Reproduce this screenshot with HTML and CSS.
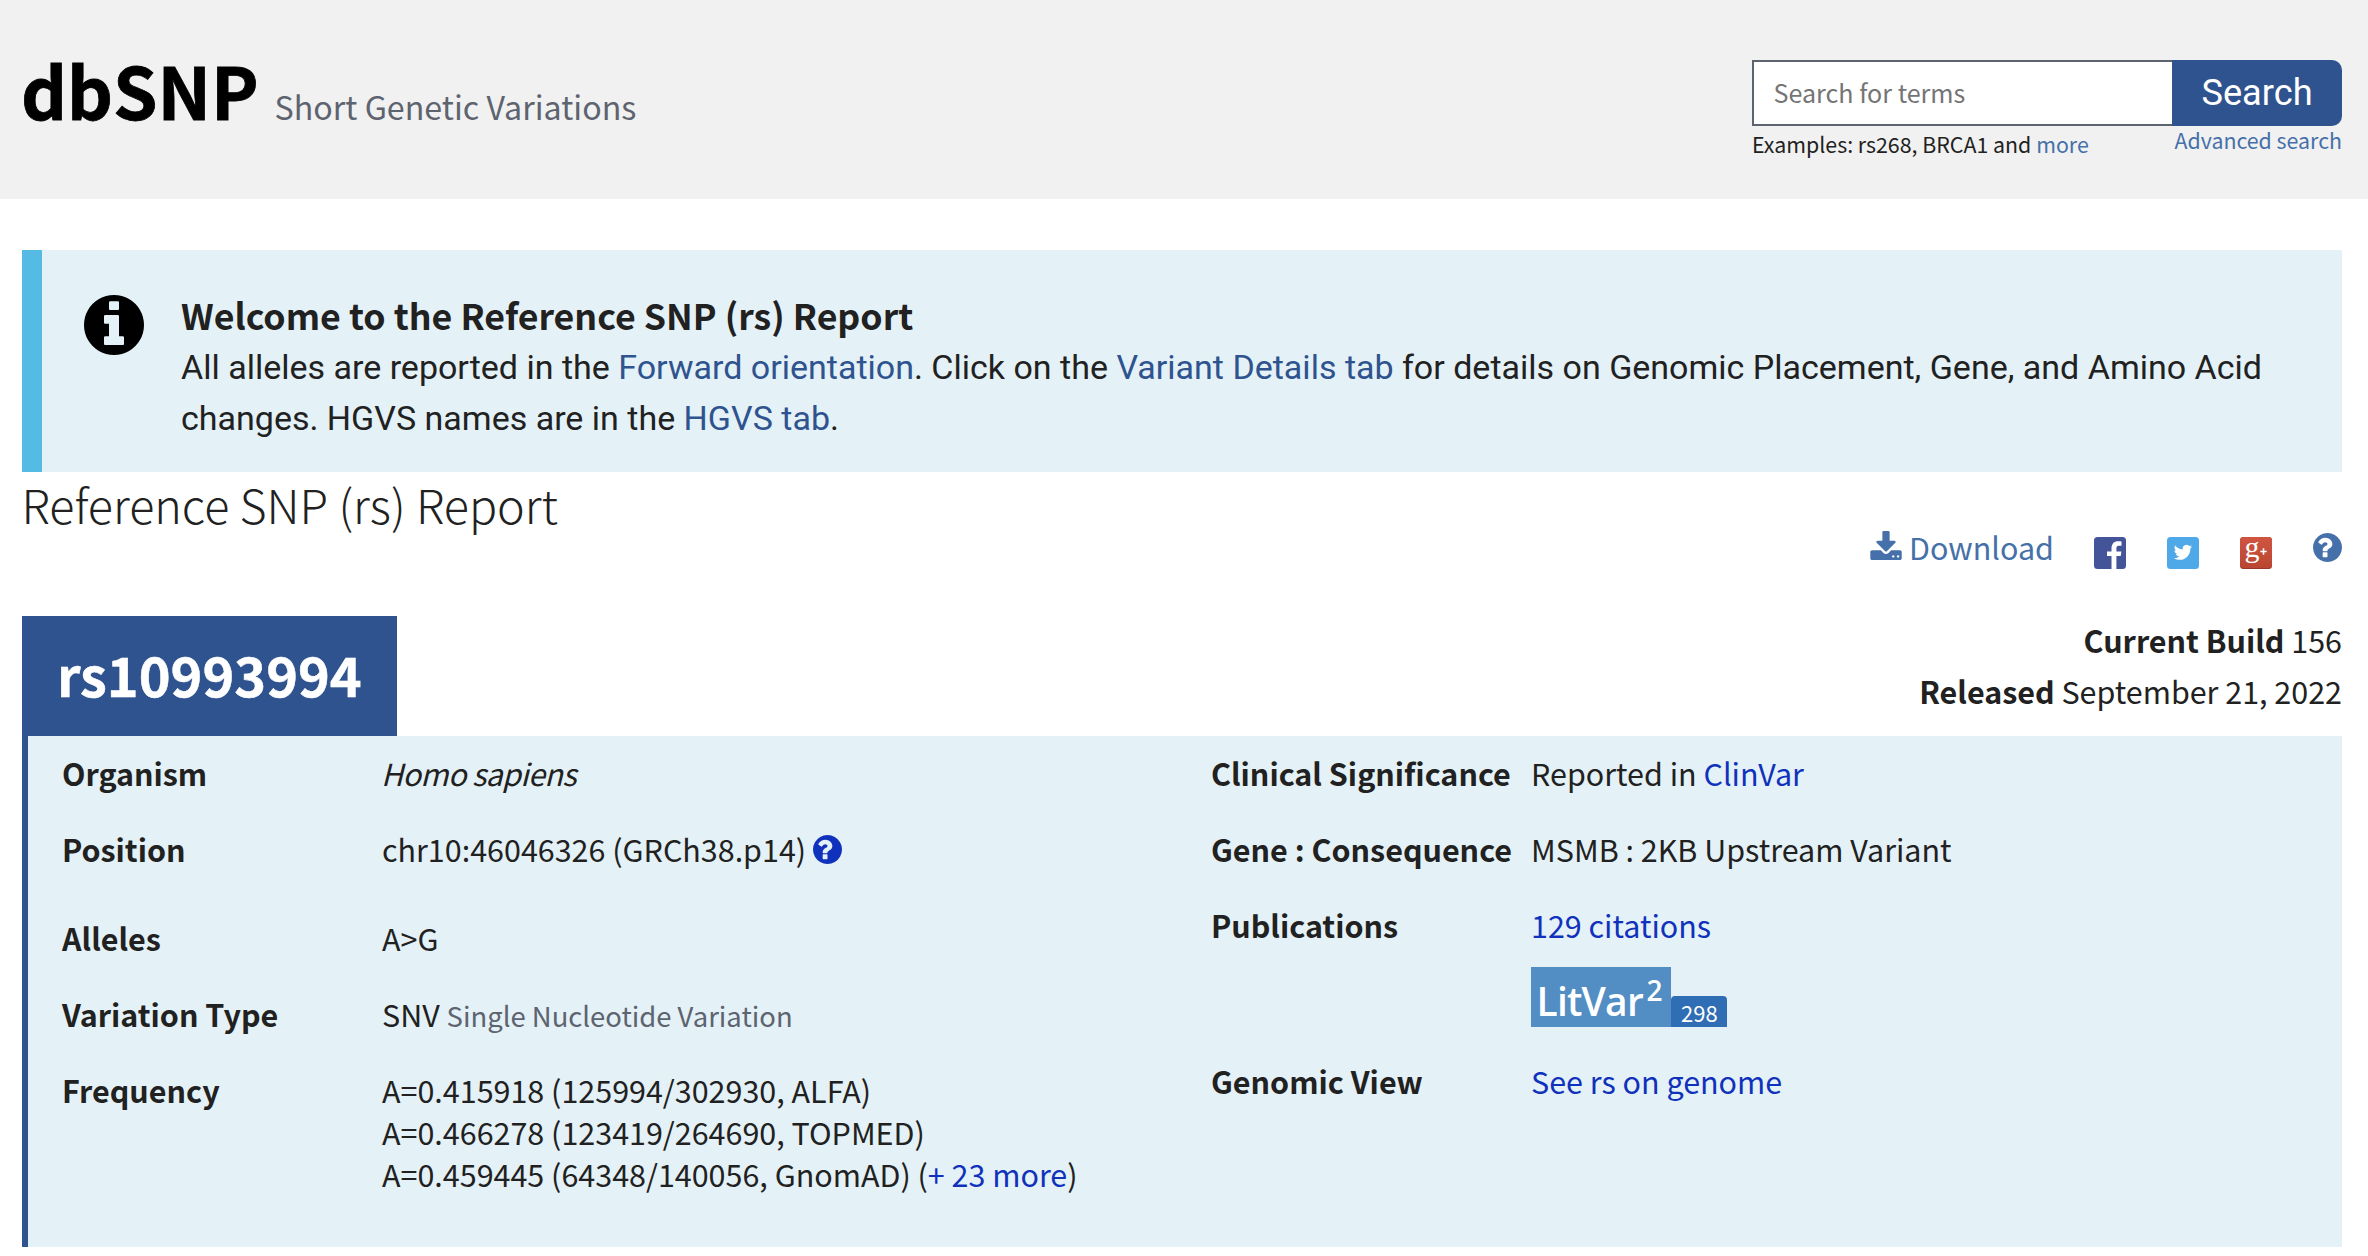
FILE: index.html
```html
<!DOCTYPE html>
<html lang="en">
<head>
<meta charset="utf-8">
<title>rs10993994 RefSNP Report - dbSNP</title>
<link rel="stylesheet" href="styles.css">
</head>
<body>
<header class="site-header">
  <div class="brand">
    <h1 class="brand-name">dbSNP</h1>
    <span class="brand-tagline">Short Genetic Variations</span>
  </div>
  <form class="search">
    <div class="search-row">
      <input class="search-input" type="text" placeholder="Search for terms" aria-label="Search">
      <button class="search-button" type="button">Search</button>
    </div>
    <div class="search-hints">
      <span class="examples">Examples: rs268, BRCA1 and <a class="link" href="#">more</a></span>
      <a class="link advanced" href="#">Advanced search</a>
    </div>
  </form>
</header>

<main class="page">
  <section class="banner">
    <svg class="banner-icon" viewBox="128 128 1536 1536"><path d="M1152 1376v-160q0-14-9-23t-23-9h-96v-512q0-14-9-23t-23-9h-320q-14 0-23 9t-9 23v160q0 14 9 23t23 9h96v320h-96q-14 0-23 9t-9 23v160q0 14 9 23t23 9h448q14 0 23-9t9-23zm-128-896v-160q0-14-9-23t-23-9h-192q-14 0-23 9t-9 23v160q0 14 9 23t23 9h192q14 0 23-9t9-23zm640 416q0 209-103 385.5t-279.5 279.5-385.5 103-385.5-103-279.5-279.5-103-385.5 103-385.5 279.5-279.5 385.5-103 385.5 103 279.5 279.5 103 385.5z"/></svg>
    <div class="banner-body">
      <h3 class="banner-title">Welcome to the Reference SNP (rs) Report</h3>
      <p class="banner-text">All alleles are reported in the <a href="#">Forward orientation</a>. Click on the <a href="#">Variant Details tab</a> for details on Genomic Placement, Gene, and Amino Acid<br>changes. HGVS names are in the <a href="#">HGVS tab</a>.</p>
    </div>
  </section>

  <h2 class="report-title">Reference SNP (rs) Report</h2>

  <div class="actions">
    <a class="link download" href="#"><svg class="download-icon" viewBox="0 0 1664 1536"><path d="M1280 1344q0-26-19-45t-45-19-45 19-19 45 19 45 45 19 45-19 19-45zm256 0q0-26-19-45t-45-19-45 19-19 45 19 45 45 19 45-19 19-45zm128-224v320q0 40-28 68t-68 28h-1472q-40 0-68-28t-28-68v-320q0-40 28-68t68-28h465l135 136q58 56 136 56t136-56l136-136h464q40 0 68 28t28 68zm-325-569q17 41-14 70l-448 448q-18 19-45 19t-45-19l-448-448q-31-29-14-70 17-39 59-39h256v-448q0-26 19-45t45-19h256q26 0 45 19t19 45v448h256q42 0 59 39z"/></svg><span class="download-label">Download</span></a>
    <svg class="social" viewBox="0 0 32 32"><rect width="32" height="32" rx="3.5" fill="#435499"/><path fill="#fff" d="M17.5 32V19H13v-4.500h4.500v-3C17.500 6.700 20 4.200 24.200 4.200c1.600 0 2.800.1 3.300.2v4.300h-2.600c-2.100 0-2.500 1-2.500 2.500v3.300h5l-.7 4.500h-4.300V32z"/></svg>
    <svg class="social" viewBox="0 0 32 32"><rect width="32" height="32" rx="3.500" fill="#4fa9e8"/><path fill="#fff" transform="translate(6.800 6.200) scale(.765)" d="M23.953 4.57a10 10 0 01-2.825.775 4.958 4.958 0 002.163-2.723c-.951.555-2.005.959-3.127 1.184a4.920 4.920 0 00-8.384 4.482C7.690 8.095 4.067 6.130 1.640 3.162a4.822 4.822 0 00-.666 2.475c0 1.710.870 3.213 2.188 4.096a4.904 4.904 0 01-2.228-.616v.060a4.923 4.923 0 003.946 4.827 4.996 4.996 0 01-2.212.085 4.936 4.936 0 004.604 3.417 9.867 9.867 0 01-6.102 2.105c-.390 0-.779-.023-1.170-.067a13.995 13.995 0 007.557 2.209c9.053 0 13.998-7.496 13.998-13.985 0-.210 0-.420-.015-.630A9.935 9.935 0 0024 4.590z"/></svg>
    <svg class="social" viewBox="0 0 32 32">
      <defs><linearGradient id="gplus" x2="0" y2="1"><stop offset="0" stop-color="#d05541"/><stop offset="1" stop-color="#b94632"/></linearGradient></defs>
      <rect width="32" height="32" rx="3.500" fill="#993826"/><rect width="32" height="31" rx="3.500" fill="url(#gplus)"/>
      <text class="gplus-letter" x="4.500" y="19.500">g</text><path d="M20.300 14.500h6.400M23.500 11.300v6.400" stroke="#fff" stroke-width="1.600"/>
    </svg>
    <svg class="help help-action" viewBox="128 128 1536 1536"><path d="M896 1376v-192q0-14-9-23t-23-9h-192q-14 0-23 9t-9 23v192q0 14 9 23t23 9h192q14 0 23-9t9-23zm256-672q0-88-55.500-163t-138.500-116-170-41q-243 0-371 213-15 24 8 42l132 100q7 6 19 6 16 0 25-12 53-68 86-92 34-24 86-24 48 0 85.500 26t37.500 59q0 38-20 61t-68 45q-63 28-115.500 86.500t-52.500 125.500v36q0 14 9 23t23 9h192q14 0 23-9t9-23q0-19 21.500-49.500t54.500-49.500q32-18 49-28.500t46-35 44.500-48 28-60.500 12.500-81zm512 192q0 209-103 385.500t-279.500 279.500-385.500 103-385.500-103-279.500-279.500-103-385.500 103-385.500 279.500-279.500 385.500-103 385.500 103 279.500 279.500 103 385.500z"/></svg>
  </div>

  <div class="record-head">
    <div class="record-id">rs10993994</div>
    <div class="build"><b>Current Build</b> 156<br><b>Released</b> September 21, 2022</div>
  </div>

  <section class="record">
    <dl class="facts facts-left">
      <dt>Organism</dt><dd class="species">Homo sapiens</dd>
      <dt>Position</dt><dd class="position">chr10:46046326 (GRCh38.p14)<svg class="help help-inline" viewBox="128 128 1536 1536"><path d="M896 1376v-192q0-14-9-23t-23-9h-192q-14 0-23 9t-9 23v192q0 14 9 23t23 9h192q14 0 23-9t9-23zm256-672q0-88-55.500-163t-138.500-116-170-41q-243 0-371 213-15 24 8 42l132 100q7 6 19 6 16 0 25-12 53-68 86-92 34-24 86-24 48 0 85.500 26t37.500 59q0 38-20 61t-68 45q-63 28-115.500 86.500t-52.500 125.500v36q0 14 9 23t23 9h192q14 0 23-9t9-23q0-19 21.500-49.500t54.500-49.500q32-18 49-28.500t46-35 44.500-48 28-60.500 12.500-81zm512 192q0 209-103 385.500t-279.500 279.500-385.500 103-385.500-103-279.500-279.500-103-385.500 103-385.500 279.500-279.500 385.500-103 385.500 103 279.500 279.500 103 385.500z"/></svg></dd>
      <dt>Alleles</dt><dd>A&gt;G</dd>
      <dt>Variation Type</dt><dd>SNV <small class="note">Single Nucleotide Variation</small></dd>
      <dt>Frequency</dt><dd>A=0.415918 (125994/302930, ALFA)<br>A=0.466278 (123419/264690, TOPMED)<br>A=0.459445 (64348/140056, GnomAD) (<a href="#">+ 23 more</a>)</dd>
    </dl>
    <dl class="facts facts-right">
      <dt>Clinical Significance</dt><dd>Reported in <a href="#">ClinVar</a></dd>
      <dt>Gene : Consequence</dt><dd>MSMB : 2KB Upstream Variant</dd>
      <dt>Publications</dt>
      <dd><a href="#">129 citations</a>
        <div class="litvar">
          <svg class="litvar-logo" viewBox="0 0 140 60"><rect width="140" height="60" fill="#528dc3"/><text class="litvar-name" x="5.500" y="49">LitVar</text><text class="litvar-version" x="115.500" y="34">2</text></svg>
          <span class="litvar-count">298</span>
        </div>
      </dd>
      <dt>Genomic View</dt><dd><a href="#">See rs on genome</a></dd>
    </dl>
  </section>
</main>
</body>
</html>
```
FILE: styles.css
```css
* { box-sizing: border-box; }

body {
  margin: 0;
  background: #fff;
  color: #212121;
  font-family: "Noto Sans CJK SC", "Noto Sans", sans-serif;
  font-size: 30.470px;
  line-height: 42px;
  overflow: hidden;
}

h1, h2, h3, p, dl, dd { margin: 0; }
a { text-decoration: none; }
svg { display: block; flex: none; }
.link { color: #4570a9; fill: #4570a9; }

/* Header */
.site-header {
  display: flex;
  justify-content: space-between;
  height: 199px;
  padding: 0 26px 0 22px;
  background: #f1f1f1;
}
.brand {
  display: flex;
  align-items: baseline;
  gap: 16px;
  padding-top: 47px;
}
.brand-name {
  margin-left: -1px;
  color: #000;
  font-size: 71.400px;
  font-weight: 700;
  line-height: 84px;
  -webkit-text-stroke: 0.800px #000;
}
.brand-tagline { color: #5d636f; font-size: 32.200px; }

.search { width: 590px; padding-top: 60px; }
.search-row { display: flex; height: 66px; }
.search-input {
  width: 420px;
  padding: 0 20px 2px 19.500px;
  border: 2px solid #5d636f;
  border-right: 0;
  border-radius: 0;
  background: #fff;
  font: 25.100px "Noto Sans CJK SC", sans-serif;
}
.search-input::placeholder { color: #757575; opacity: 1; }
.search-button {
  width: 170px;
  padding: 0;
  border: 0;
  border-radius: 0 10px 10px 0;
  background: #2f538f;
  color: #fff;
  font: 36.200px/66px Roboto, sans-serif;
}
.search-hints {
  display: flex;
  justify-content: space-between;
  font-size: 21.350px;
}
.examples { line-height: 35px; }
.advanced { line-height: 27px; }

/* Page */
.page { padding: 51px 26px 0 22px; }

.banner {
  display: flex;
  gap: 37px;
  height: 222px;
  padding-left: 42px;
  border-left: 20px solid #56bbe4;
  background: #e4f1f7;
}
.banner-icon { width: 60px; height: 60px; margin-top: 45px; fill: #000; }
.banner-body { padding-top: 40px; white-space: nowrap; }
.banner-title { font-size: 35.700px; font-weight: 700; line-height: 49px; }
.banner-text { margin-top: 3px; font: 34px/51px Roboto, sans-serif; }
.banner-text a { color: #2f538f; }

.report-title {
  margin-left: -0.500px;
  font-size: 46.650px;
  font-weight: 300;
  line-height: 63px;
}

.actions {
  display: flex;
  justify-content: flex-end;
  gap: 41px;
  height: 85px;
  margin-top: -4px;
}
.download { display: flex; gap: 7px; margin-right: -1px; }
.download-icon { width: 32px; height: 29px; }
.download-label { margin-top: 1px; line-height: 30px; }
.social { width: 32px; height: 32px; margin-top: 6px; overflow: visible; }
.gplus-letter { fill: #fff; font: 30px "Liberation Serif", serif; }
.help { width: 29px; height: 29px; }
.help-action { margin-top: 2px; fill: #4570a9; }

.record-head { display: flex; justify-content: space-between; height: 120px; }
.record-id {
  width: 375px;
  padding-left: 35px;
  background: #2f538f;
  color: #fff;
  font-size: 54px;
  font-weight: 700;
  line-height: 115px;
  -webkit-text-stroke: 0.500px #fff;
}
.build { margin-top: -1px; line-height: 51px; text-align: right; }

.record {
  display: flex;
  height: 511px;
  padding: 16px 0 0 34px;
  border-left: 6px solid #2f538f;
  background: #e4f1f7;
}
.facts { display: grid; grid-template-columns: 320px auto; align-content: start; }
.facts dt { font-weight: 700; }
.facts a { color: #1031bb; }
.facts-left { width: 1149px; grid-template-rows: 76px 89px 76px 76px auto; }
.facts-right { grid-template-rows: 76px 76px 156px auto; }

.species { margin-left: -1px; font-style: italic; letter-spacing: -0.650px; }
.position { display: flex; gap: 7px; }
.help-inline { margin-top: 7px; fill: #1031bb; }
.note { color: #5d636f; font-size: 27.450px; }

.litvar { display: flex; align-items: flex-end; margin-top: 21px; }
.litvar-logo { width: 140px; height: 60px; overflow: visible; }
.litvar-name { fill: #fff; font: 600 39px "Open Sans", sans-serif; letter-spacing: -0.800px; }
.litvar-version { fill: #fff; font: 600 28px "Open Sans", sans-serif; }
.litvar-count {
  width: 56px;
  height: 31px;
  padding-left: 10px;
  border-radius: 4px 4px 0 0;
  background: #2f6db4;
  color: #fff;
  font-size: 22px;
  line-height: 33px;
}
```
